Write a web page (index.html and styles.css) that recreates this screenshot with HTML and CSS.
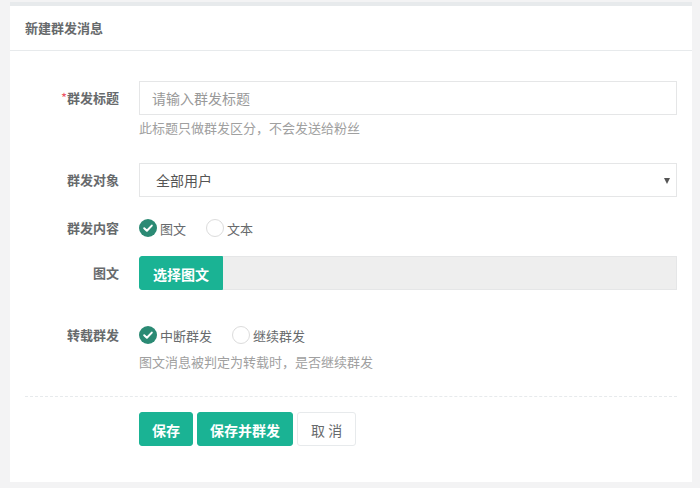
FILE: index.html
```html
<!DOCTYPE html>
<html lang="zh">
<head>
<meta charset="utf-8">
<link rel="stylesheet" href="styles.css">
</head>
<body>
<div class="panel">
  <div class="panel-title">新建群发消息</div>
  <div class="panel-body">
    <div class="row row-title">
      <div class="label"><span class="req">*</span>群发标题</div>
      <div class="control">
        <div class="input placeholder">请输入群发标题</div>
        <div class="help">此标题只做群发区分，不会发送给粉丝</div>
      </div>
    </div>
    <div class="row row-target">
      <div class="label">群发对象</div>
      <div class="control">
        <div class="select">全部用户<span class="caret"></span></div>
      </div>
    </div>
    <div class="row row-content">
      <div class="label">群发内容</div>
      <div class="control radios">
        <span class="radio checked"><span class="dot"><svg viewBox="0 0 18 18" width="18" height="18"><path d="M5.2 9.2 L7.9 11.8 L12.8 6.6" fill="none" stroke="#fff" stroke-width="2" stroke-linecap="round" stroke-linejoin="round"/></svg></span>图文</span>
        <span class="radio"><span class="dot"></span>文本</span>
      </div>
    </div>
    <div class="row row-pick">
      <div class="label">图文</div>
      <div class="control">
        <div class="input-group"><span class="btn btn-green btn-left">选择图文</span><span class="gray-field"></span></div>
      </div>
    </div>
    <div class="row row-repost">
      <div class="label">转载群发</div>
      <div class="control">
        <div class="radios">
          <span class="radio checked"><span class="dot"><svg viewBox="0 0 18 18" width="18" height="18"><path d="M5.2 9.2 L7.9 11.8 L12.8 6.6" fill="none" stroke="#fff" stroke-width="2" stroke-linecap="round" stroke-linejoin="round"/></svg></span>中断群发</span>
          <span class="radio radio-wide"><span class="dot"></span>继续群发</span>
        </div>
        <div class="help help-tight">图文消息被判定为转载时，是否继续群发</div>
      </div>
    </div>
    <div class="divider"></div>
    <div class="row row-actions">
      <div class="label"></div>
      <div class="control buttons">
        <span class="btn btn-green">保存</span>
        <span class="btn btn-green">保存并群发</span>
        <span class="btn btn-white">取 消</span>
      </div>
    </div>
  </div>
</div>
</body>
</html>
```

FILE: styles.css
```css
html, body {
  margin: 0;
  padding: 0;
}
body {
  background: #f3f3f4;
  padding: 2px 8px 6px 10px;
  font-family: "Noto Sans CJK SC", "Noto Sans", sans-serif;
  font-size: 13px;
  color: #676a6c;
}
.panel {
  background: #fff;
  border-top: 4px solid #e7eaec;
  height: 476px;
}
.panel-title {
  height: 44px;
  line-height: 44px;
  padding-left: 15px;
  border-bottom: 1px solid #e7eaec;
  font-weight: 600;
  font-size: 13px;
  color: #676a6c;
}
.panel-body {
  padding: 30px 15px 0 15px;
}
.row {
  display: flex;
  align-items: flex-start;
}
.label {
  width: 94px;
  flex: none;
  text-align: right;
  font-weight: 700;
  height: 34px;
  line-height: 34px;
  margin-right: 20px;
  color: #676a6c;
}
.req {
  color: #ed5565;
  font-weight: 400;
}
.control {
  flex: 1;
  min-width: 0;
}
.input, .select {
  height: 32px;
  border: 1px solid #e5e6e7;
  line-height: 32px;
  font-size: 14px;
  padding-left: 12px;
}
.placeholder {
  color: #999;
}
.select {
  position: relative;
  padding-left: 16px;
  color: #555;
}
.caret {
  position: absolute;
  right: 6px;
  top: 14px;
  width: 0;
  height: 0;
  border-left: 3.5px solid transparent;
  border-right: 3.5px solid transparent;
  border-top: 6px solid #555;
}
.help {
  margin-top: 4px;
  line-height: 18px;
  color: #a0a0a0;
  font-size: 13px;
}
.help-tight {
  margin-top: 1px;
}
.row-target {
  margin-top: 26px;
}
.row-content {
  margin-top: 14px;
}
.row-pick {
  margin-top: 11px;
}
.row-repost {
  margin-top: 28px;
}
.radios {
  display: flex;
  align-items: center;
  height: 34px;
}
.radio {
  display: inline-flex;
  align-items: center;
  margin-right: 20px;
  color: #676a6c;
}
.radio-wide {
  margin-left: 0;
}
.row-repost .radio {
  margin-right: 20px;
}
.dot {
  width: 16px;
  height: 16px;
  border: 1px solid #dcdcdc;
  border-radius: 50%;
  background: #fff;
  margin-right: 3px;
  display: inline-flex;
  align-items: center;
  justify-content: center;
}
.radio.checked .dot {
  width: 18px;
  height: 18px;
  border: none;
  background: #2b8a74;
}
.radio.checked .dot svg {
  display: block;
}
.input-group {
  display: flex;
  height: 34px;
}
.gray-field {
  flex: 1;
  background: #eee;
  border: 1px solid #e5e6e7;
  border-left: none;
}
.btn {
  display: inline-block;
  height: 34px;
  line-height: 34px;
  box-sizing: border-box;
  border-radius: 3px;
  font-size: 14px;
  text-align: center;
}
.btn-green {
  background: #1ab394;
  color: #fff;
  font-weight: 700;
  padding: 0 12px;
  border: 1px solid #1ab394;
}
.btn-left {
  border-radius: 3px 0 0 3px;
  padding: 0 13px;
}
.btn-white {
  background: #fff;
  border: 1px solid #e7eaec;
  color: #676a6c;
  padding: 0 13px;
}
.divider {
  border-top: 1px dashed #e7eaec;
  margin-top: 25px;
}
.row-actions {
  margin-top: 15px;
}
.buttons {
  display: flex;
  gap: 4px;
}
```
